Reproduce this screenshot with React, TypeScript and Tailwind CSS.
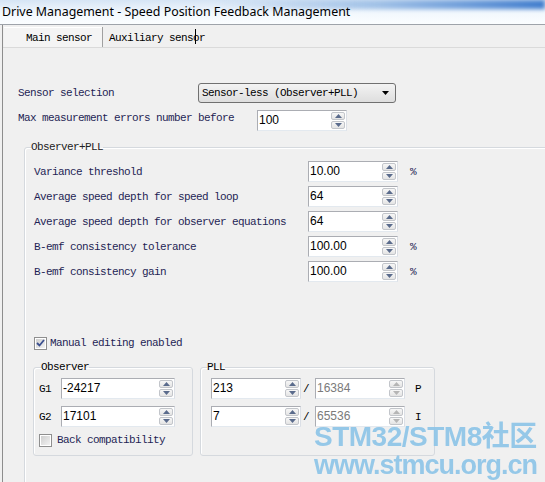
import React from "react";

const mono = "font-['Liberation_Mono',monospace] text-[11px] tracking-[-0.6px] leading-[14px]";
const sans = "font-['Liberation_Sans',Arial,sans-serif] text-[12px]";

interface SpinProps {
  value: string;
  className?: string;
  disabled?: boolean;
}

// small up/down buttons on the right of a numeric box
const SpinButtons = ({ disabled = false }: { disabled?: boolean }) => {
  const arrow = disabled ? "#b5b5b5" : "#5a6b8c";
  return (
    <div className="flex flex-col w-[15px] py-[1px] pr-[1px] gap-[1px]">
      {[0, 1].map((i) => (
        <div
          key={i}
          className="flex-1 flex items-center justify-center border border-[#c2c5ca] rounded-[2px] bg-linear-to-b from-[#f7f7f7] to-[#e4e4e4]"
        >
          <svg width="7" height="4" viewBox="0 0 7 4">
            {i === 0 ? (
              <path d="M0 4 L3.5 0 L7 4 Z" fill={arrow} />
            ) : (
              <path d="M0 0 L3.5 4 L7 0 Z" fill={arrow} />
            )}
          </svg>
        </div>
      ))}
    </div>
  );
};

const Spin = ({ value, className = "", disabled = false }: SpinProps) => {
  return (
    <div
      className={`flex h-[21px] bg-white border border-[#abadb3] border-r-[#dbdfe6] border-b-[#e3e9ef] ${className}`}
    >
      <span
        className={`flex-1 pl-[1px] leading-[19px] ${sans} ${
          disabled ? "text-[#7a7a7a]" : "text-black"
        }`}
      >
        {value}
      </span>
      <SpinButtons disabled={disabled} />
    </div>
  );
};

const Check = ({ checked = false }: { checked?: boolean }) => (
  <div className="w-[13px] h-[13px] border border-[#8f8f8f] p-[1px] bg-white">
    <div className="w-full h-full flex items-center justify-center bg-linear-to-br from-[#cfcfcf] to-[#f2f2f2]">
      {checked && (
        <svg width="9" height="8" viewBox="0 0 9 8">
          <path d="M1 4 L3.5 6.5 L8 1" stroke="#3b4f8f" strokeWidth="1.8" fill="none" />
        </svg>
      )}
    </div>
  </div>
);

const rows = [
  { label: "Variance threshold", value: "10.00", unit: "%" },
  { label: "Average speed depth for speed loop", value: "64", unit: "" },
  { label: "Average speed depth for observer equations", value: "64", unit: "" },
  { label: "B-emf consistency tolerance", value: "100.00", unit: "%" },
  { label: "B-emf consistency gain", value: "100.00", unit: "%" },
];

export default function App() {
  return (
    <div className="relative w-[545px] h-[482px] overflow-hidden bg-[#f0f0f0] flex flex-col">
      {/* window caption */}
      <div className="relative h-[25px] shrink-0 border-b border-[#9ea3aa] bg-linear-to-b from-[#d6e5f5] via-[#f1f7fd] to-[#fbfdff] overflow-hidden">
        <div className="absolute right-0 top-0 w-[330px] h-[9px] bg-linear-to-r from-transparent via-[#9fc0e6] to-[#3f7ccc] blur-[2px]" />
        <div className="relative pl-[2px] pt-[3px] font-['Noto_Sans',sans-serif] text-[12.4px] leading-[17px] text-black">
          Drive Management - Speed Position Feedback Management
        </div>
      </div>

      <div className="flex-1 ml-[2px] border-l border-[#8d8d8d] flex flex-col">
        {/* tabs */}
        <div className="flex h-[22px] pt-[2px] shrink-0">
          <div className={`w-[98px] ml-[1px] pl-[22px] pt-[3px] bg-[#f4f4f4] border-t border-white ${mono} text-black`}>
            Main sensor
          </div>
          <div className={`relative pl-[6px] pt-[4px] border-l border-[#a0a0a0] ${mono} text-black`}>
            Auxiliary sensor
            <span className="absolute left-[92px] top-[2px] w-[1px] h-[15px] bg-black" />
          </div>
        </div>

        {/* panel */}
        <div className="flex-1 border-t border-[#dadada] pt-[35px]">
          <div className="flex items-center h-[20px]">
            <div className={`w-[195px] pl-[15px] ${mono} text-[#1f1f55]`}>Sensor selection</div>
            <div className="w-[198px] h-[20px] flex items-center justify-between pl-[3px] pr-[6px] border border-[#707070] rounded-[3px] bg-linear-to-b from-[#f3f3f3] to-[#dedede]">
              <span className={`${mono} text-black`}>Sensor-less (Observer+PLL)</span>
              <svg width="7" height="4" viewBox="0 0 7 4">
                <path d="M0 0 L7 0 L3.5 4 Z" fill="#000" />
              </svg>
            </div>
          </div>

          <div className="flex items-start mt-[7px]">
            <div className={`w-[254px] pl-[15px] pt-[1px] ${mono} text-[#1f1f55]`}>
              Max measurement errors number before
            </div>
            <Spin value="100" className="w-[90px]" />
          </div>

          <fieldset className="mt-[9px] ml-[21px] w-[600px] h-[400px] border border-[#d5d9de] rounded-[3px] shadow-[inset_1px_1px_0_#ffffff]">
            <legend className={`ml-[6px] ${mono} text-[#222222]`}>Observer+PLL</legend>
            <div className="pl-[8px]">
              <div className="flex flex-col gap-[4px] mt-[7px]">
                {rows.map((r) => (
                  <div key={r.label} className="flex items-center">
                    <div className={`w-[275px] pl-[1px] ${mono} text-[#1f1f55]`}>{r.label}</div>
                    <Spin value={r.value} className="w-[90px]" />
                    <span className={`ml-[12px] ${mono} text-[#1f1f55]`}>{r.unit}</span>
                  </div>
                ))}
              </div>

              <div className="flex items-center mt-[54px] pl-[1px]">
                <Check checked />
                <span className={`ml-[3px] ${mono} text-[#1f1f55]`}>Manual editing enabled</span>
              </div>

              <div className="flex mt-[10px]">
                <fieldset className="w-[160px] h-[96px] border border-[#d5d9de] rounded-[3px] shadow-[inset_1px_1px_0_#ffffff]">
                  <legend className={`ml-[7px] ${mono} text-black`}>Observer</legend>
                  <div className="pl-[5px] pt-[4px] flex flex-col">
                    <div className="flex items-center">
                      <span className={`w-[22px] ${mono} text-black`}>G1</span>
                      <Spin value="-24217" className="w-[114px]" />
                    </div>
                    <div className="flex items-center mt-[7px]">
                      <span className={`w-[22px] ${mono} text-black`}>G2</span>
                      <Spin value="17101" className="w-[114px]" />
                    </div>
                    <div className="flex items-center mt-[6px]">
                      <Check />
                      <span className={`ml-[5px] ${mono} text-[#1f1f55]`}>Back compatibility</span>
                    </div>
                  </div>
                </fieldset>

                <fieldset className="ml-[7px] w-[235px] h-[96px] border border-[#d5d9de] rounded-[3px] shadow-[inset_1px_1px_0_#ffffff]">
                  <legend className={`ml-[6px] ${mono} text-black`}>PLL</legend>
                  <div className="pl-[10px] pt-[4px] flex flex-col gap-[7px]">
                    {[
                      ["213", "16384", "P"],
                      ["7", "65536", "I"],
                    ].map(([num, den, tag]) => (
                      <div key={tag} className="flex items-center">
                        <Spin value={num} className="w-[90px]" />
                        <span className={`ml-[2px] w-[12px] ${mono} text-black`}>/</span>
                        <Spin value={den} className="w-[90px]" disabled />
                        <span className={`ml-[10px] ${mono} text-black`}>{tag}</span>
                      </div>
                    ))}
                  </div>
                </fieldset>
              </div>
            </div>
          </fieldset>
        </div>
      </div>

      {/* site watermark */}
      <div className="absolute left-[314px] top-[422px] font-['Liberation_Sans',Arial,'Noto_Sans_CJK_SC',sans-serif] font-bold text-[#8cc4e8] opacity-90 pointer-events-none">
        <div className="text-[28px] leading-[30px] tracking-[-0.5px]">STM32/STM8社区</div>
        <div className="text-[27px] leading-[26px] tracking-[-1px]">www.stmcu.org.cn</div>
      </div>
    </div>
  );
}
